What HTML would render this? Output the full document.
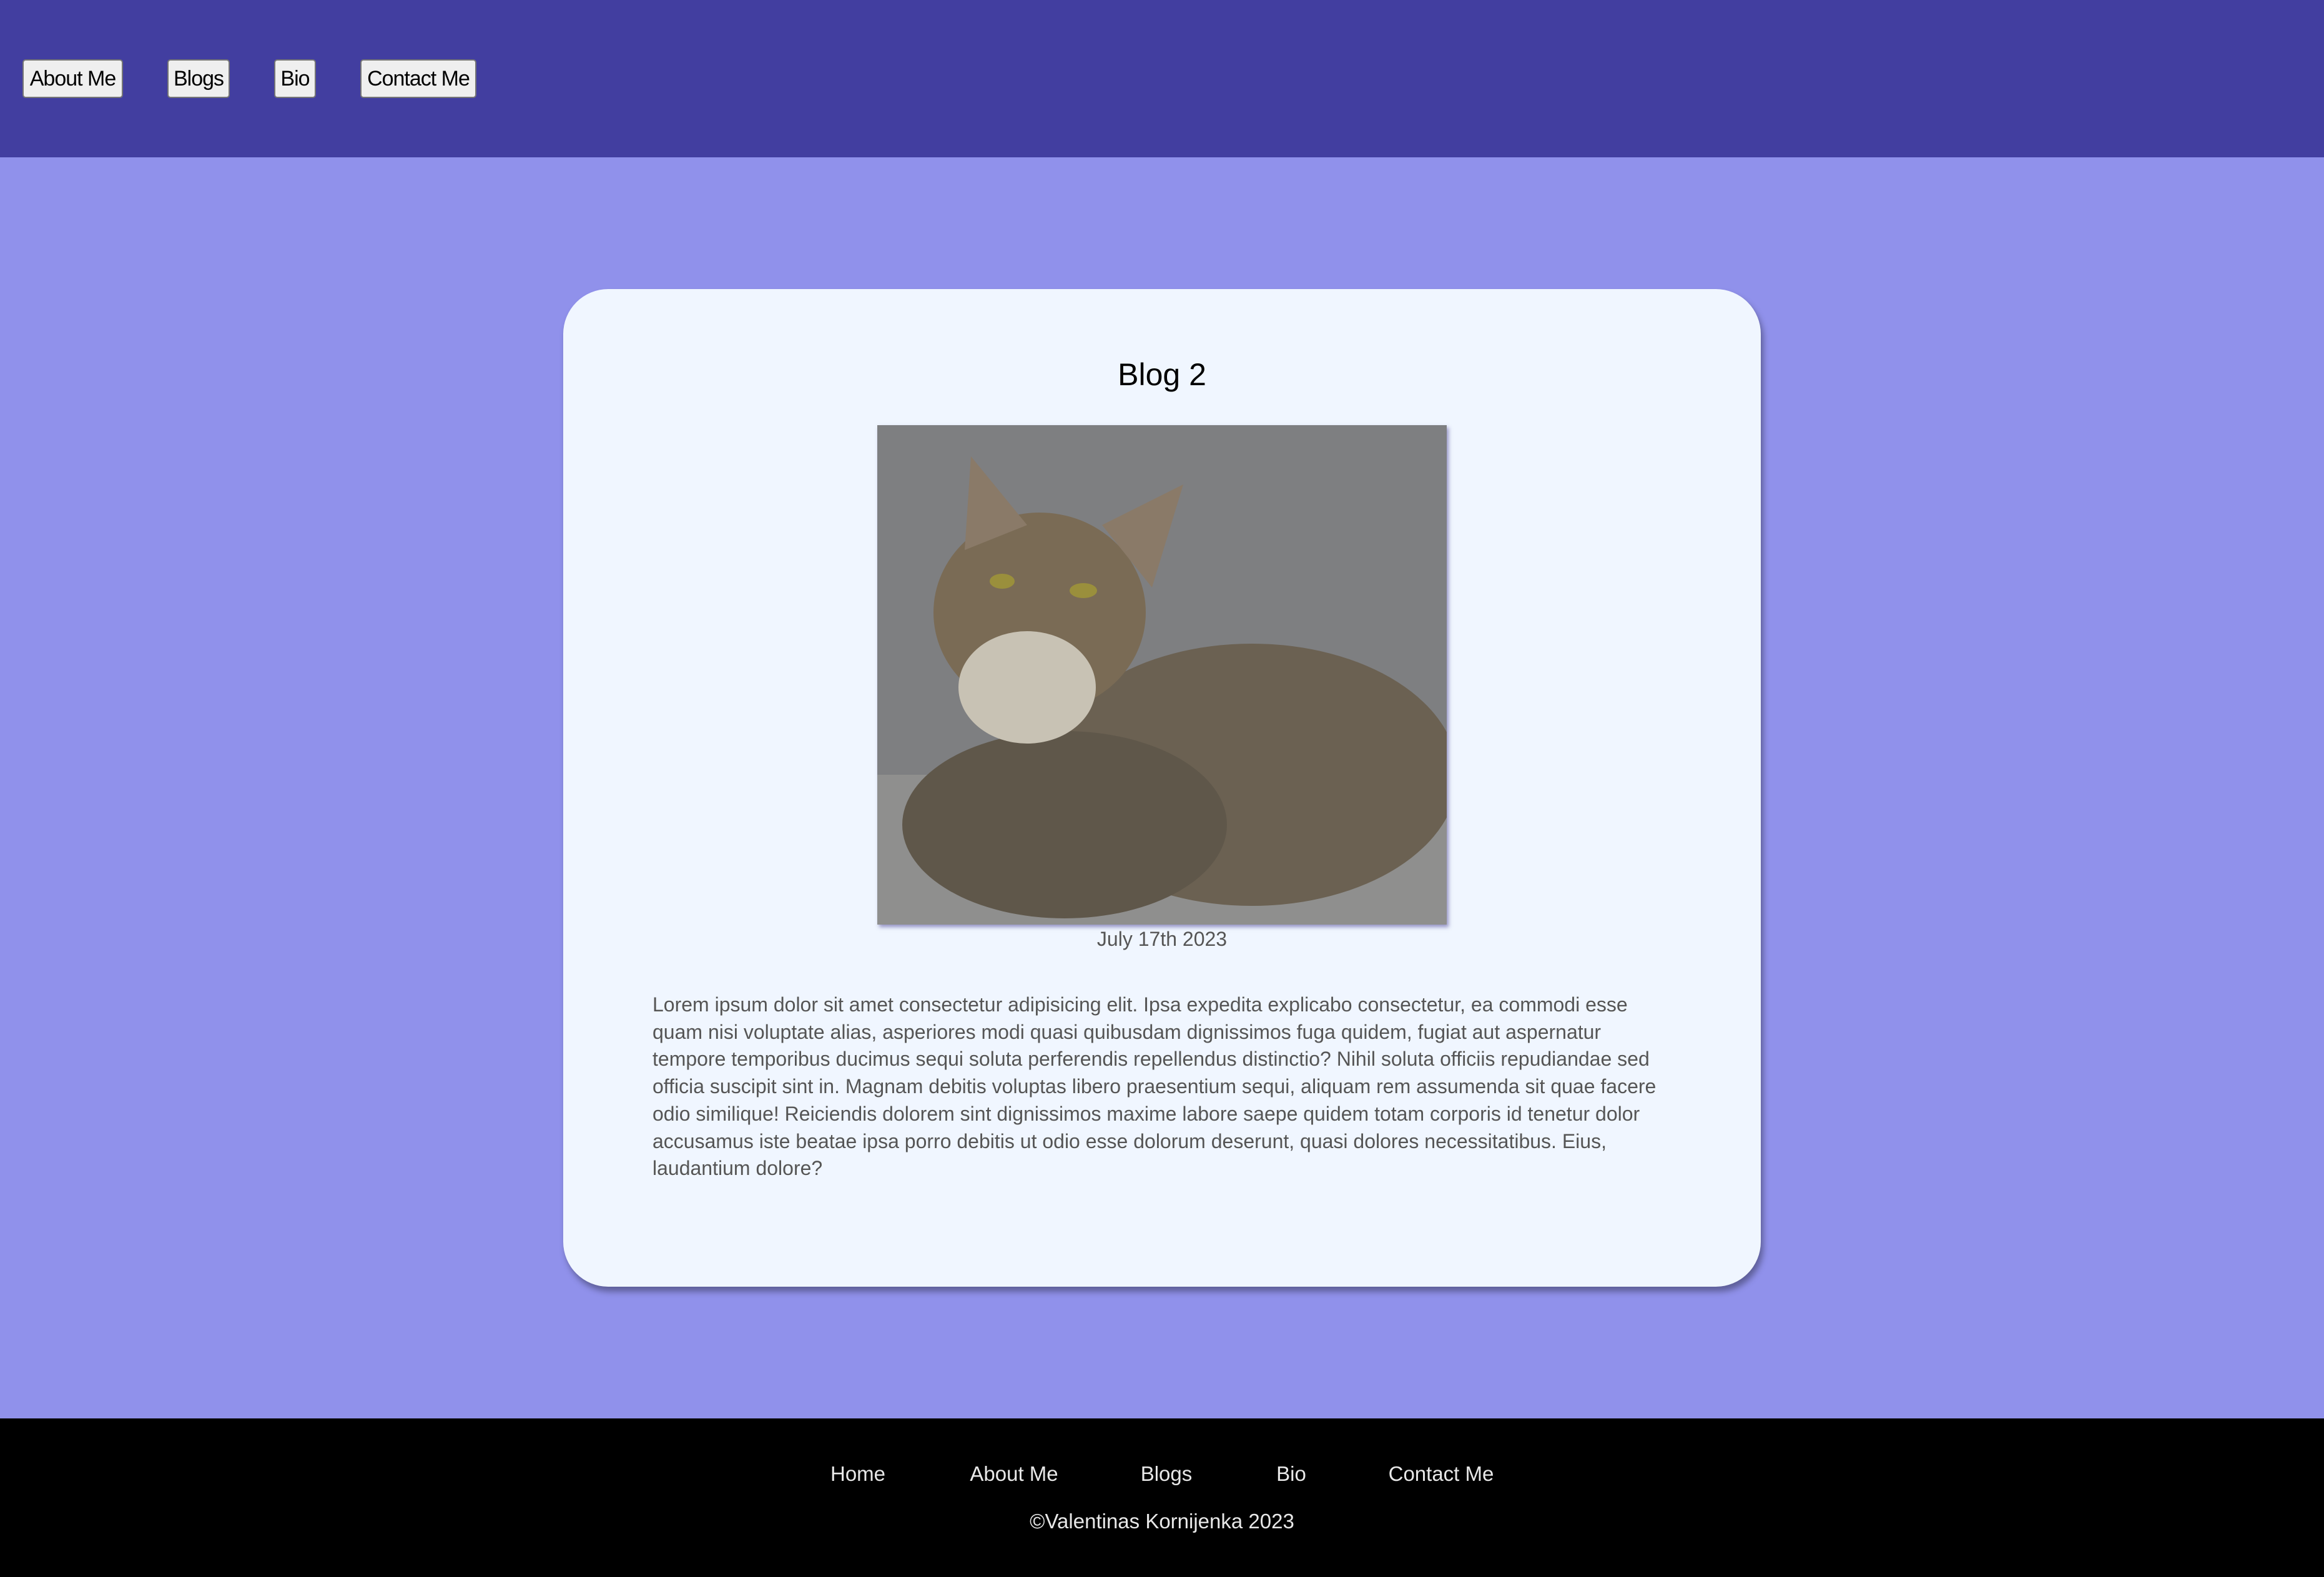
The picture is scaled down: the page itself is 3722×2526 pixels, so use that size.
<!DOCTYPE html>
<html><head><meta charset="utf-8"><style>
*{margin:0;padding:0;box-sizing:border-box}
body{width:3722px;height:2526px;background:#9091eb;font-family:"Liberation Sans",sans-serif;position:relative;overflow:hidden}
header{position:absolute;left:0;top:0;width:3722px;height:252px;background:#423ea0}
.btn{position:absolute;top:95px;height:62px;background:#efefef;border:2px solid #767676;border-radius:5px;font-size:34px;color:#000;display:flex;align-items:center;justify-content:center;letter-spacing:-1px}
.card{position:absolute;left:902px;top:463px;width:1918px;height:1598px;background:#f0f6ff;border-radius:72px;box-shadow:4px 8px 10px rgba(0,0,0,.35)}
h1{position:absolute;left:0;width:100%;top:571px;text-align:center;font-weight:normal;font-size:50px;color:#000}
.img{position:absolute;left:1405px;top:681px;width:912px;height:800px;box-shadow:3px 4px 6px rgba(60,50,140,.5);overflow:hidden;background:#7e7f81}
.date{position:absolute;left:0;width:100%;top:1486px;text-align:center;font-size:32px;color:#555}
p{position:absolute;left:1045px;top:1588px;width:1610px;font-size:32px;line-height:43.7px;color:#555}
footer{position:absolute;left:0;top:2272px;width:3722px;height:254px;background:#000;color:#e8e8e8}
footer a{position:absolute;top:70px;font-size:33px;transform:translateX(-50%);white-space:nowrap}
.copy{position:absolute;top:146px;left:0;width:100%;text-align:center;font-size:33px}
</style></head><body>
<header>
<div class="btn" style="left:36px;width:161px">About Me</div>
<div class="btn" style="left:268px;width:100px">Blogs</div>
<div class="btn" style="left:439px;width:67px">Bio</div>
<div class="btn" style="left:577px;width:186px">Contact Me</div>
</header>
<div class="card"></div>
<h1>Blog 2</h1>
<div class="img">
<svg width="912" height="800" viewBox="0 0 912 800">
<rect width="912" height="800" fill="#7e7f81"/>
<rect y="560" width="912" height="240" fill="#8f8f8e"/>
<ellipse cx="600" cy="560" rx="330" ry="210" fill="#6b6152"/>
<ellipse cx="300" cy="640" rx="260" ry="150" fill="#5f574a"/>
<ellipse cx="260" cy="300" rx="170" ry="160" fill="#7a6b55"/>
<polygon points="140,200 150,50 240,160" fill="#8a7a68"/>
<polygon points="360,160 490,95 440,260" fill="#8a7a68"/>
<ellipse cx="240" cy="420" rx="110" ry="90" fill="#c8c2b4"/>
<ellipse cx="200" cy="250" rx="20" ry="12" fill="#9a8f3c"/>
<ellipse cx="330" cy="265" rx="22" ry="12" fill="#9a8f3c"/>
</svg></div>
<div class="date">July 17th 2023</div>
<p>Lorem ipsum dolor sit amet consectetur adipisicing elit. Ipsa expedita explicabo consectetur, ea commodi esse quam nisi voluptate alias, asperiores modi quasi quibusdam dignissimos fuga quidem, fugiat aut aspernatur tempore temporibus ducimus sequi soluta perferendis repellendus distinctio? Nihil soluta officiis repudiandae sed officia suscipit sint in. Magnam debitis voluptas libero praesentium sequi, aliquam rem assumenda sit quae facere odio similique! Reiciendis dolorem sint dignissimos maxime labore saepe quidem totam corporis id tenetur dolor accusamus iste beatae ipsa porro debitis ut odio esse dolorum deserunt, quasi dolores necessitatibus. Eius, laudantium dolore?</p>
<footer>
<a style="left:1374px">Home</a>
<a style="left:1624px">About Me</a>
<a style="left:1868px">Blogs</a>
<a style="left:2068px">Bio</a>
<a style="left:2308px">Contact Me</a>
<div class="copy">©Valentinas Kornijenka 2023</div>
</footer>
</body></html>
